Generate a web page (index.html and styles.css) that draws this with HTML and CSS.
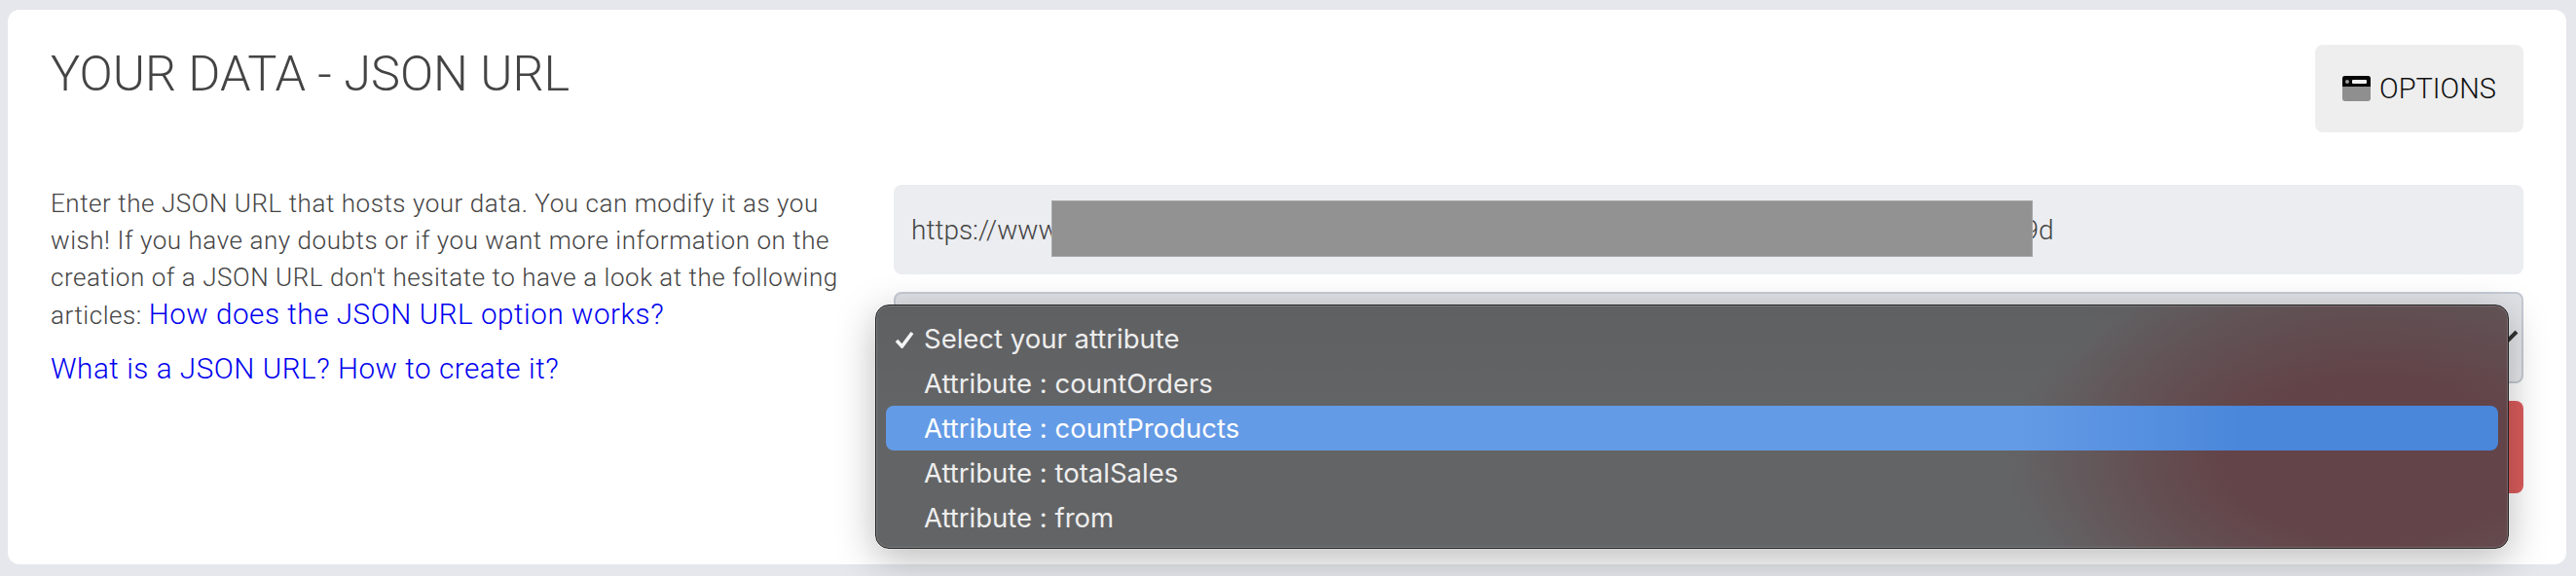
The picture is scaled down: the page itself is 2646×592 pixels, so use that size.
FILE: index.html
```html
<!DOCTYPE html>
<html lang="en">
<head>
    <meta charset="UTF-8">
    <title>Your data - JSON URL</title>
    <link rel="stylesheet" href="styles.css">
</head>
<body>
    <section class="card">
        <header class="card-head">
            <h1>YOUR DATA - JSON URL</h1>
            <button class="options-btn">
                <svg class="options-icon" viewBox="0 0 29 26" width="29" height="26">
                    <rect width="29" height="26" rx="3" fill="#8f8f8f"/>
                    <path d="M3 0h23a3 3 0 0 1 3 3v8H0V3a3 3 0 0 1 3-3z" fill="#050505"/>
                    <circle cx="5" cy="6" r="2" fill="#9a9a9a"/>
                    <rect x="10" y="4" width="15" height="4" rx="1" fill="#f2f2f2"/>
                </svg>
                OPTIONS
            </button>
        </header>
        <div class="columns">
            <div class="intro">
                <p>Enter the JSON URL that hosts your data. You can modify it as you wish! If you have any doubts or if you want more information on the creation of a JSON URL don't hesitate to have a look at the following articles: <a href="#">How does the JSON URL option works?</a></p>
                <p class="intro-link"><a href="#">What is a JSON URL? How to create it?</a></p>
            </div>
            <div class="fields">
                <div class="url-field">
                    <span>https://www</span>
                    <span class="redacted"></span>
                    <span class="url-end">9d</span>
                </div>
                <div class="select-field">
                    <svg class="chevron" viewBox="0 0 34 20" width="34" height="20">
                        <path d="M2 2l15 15L32 2" fill="none" stroke="#333" stroke-width="4"/>
                    </svg>
                </div>
                <div class="submit-row">
                    <button class="submit-btn"></button>
                </div>
                <ul class="menu">
                    <li class="menu-item">
                        <svg class="check" viewBox="0 0 20 18" width="20" height="18">
                            <path d="M2 10l5.5 6L18 2" fill="none" stroke="#f4f4f4" stroke-width="3.6"/>
                        </svg>
                        Select your attribute
                    </li>
                    <li class="menu-item">Attribute : countOrders</li>
                    <li class="menu-item active">Attribute : countProducts</li>
                    <li class="menu-item">Attribute : totalSales</li>
                    <li class="menu-item">Attribute : from</li>
                </ul>
            </div>
        </div>
    </section>
</body>
</html>
```

FILE: styles.css
```css
html, body {
    height: 100%;
    overflow: hidden;
}
body {
    margin: 0;
    padding: 10px 10px 12px 8px;
    box-sizing: border-box;
    background-color: #e5e7ec;
    color: #444;
    font-family: 'Roboto', 'Liberation Sans', sans-serif;
    font-weight: 300;
}
.card {
    background-color: #fff;
    border-radius: 12px;
    padding: 36px 44px 73px;
}
.card-head {
    display: flex;
    justify-content: space-between;
    align-items: flex-start;
    margin-bottom: 54px;
}
h1 {
    margin: 0;
    font-size: 50.5px;
    font-weight: 300;
    line-height: 60px;
    color: #444;
}
.options-btn {
    display: flex;
    align-items: center;
    justify-content: center;
    gap: 9px;
    width: 214px;
    height: 90px;
    border: none;
    border-radius: 8px;
    background-color: #eee;
    color: #111;
    font-family: inherit;
    font-size: 29px;
    font-weight: 300;
}
.options-icon {
    flex: none;
}
.columns {
    display: grid;
    grid-template-columns: 820px 1fr;
    gap: 46px;
}
.intro {
    font-size: 26px;
    line-height: 38px;
    letter-spacing: 0.55px;
}
.intro p {
    margin: 0;
}
.intro .intro-link {
    margin-top: 17px;
}
.intro a {
    color: #0000ee;
    text-decoration: none;
    font-size: 29.6px;
}
.fields {
    position: relative;
    display: flex;
    flex-direction: column;
    gap: 18px;
}
.url-field {
    display: flex;
    align-items: center;
    height: 92px;
    padding-left: 18px;
    border-radius: 8px;
    background-color: #ecedf1;
    font-size: 28px;
    color: #444;
}
.redacted {
    width: 1008px;
    height: 58px;
    margin: -2px 0 0 -8px;
    box-sizing: border-box;
    border: 1px solid #a6a6a8;
    background-color: #929292;
    position: relative;
}
.url-end {
    margin-left: -9px;
}
.select-field {
    display: flex;
    align-items: center;
    justify-content: flex-end;
    height: 94px;
    box-sizing: border-box;
    padding: 4px 3px 0 0;
    border: 2px solid #c5cad3;
    border-radius: 8px;
    background: linear-gradient(#dfe1e6, #e8e9ed);
}
.submit-row {
    display: flex;
    justify-content: flex-end;
}
.submit-btn {
    width: 372px;
    height: 95px;
    border: none;
    border-radius: 8px;
    background-color: #dc5c5c;
}
.menu {
    position: absolute;
    top: 123px;
    left: -19px;
    right: 15px;
    margin: 0;
    padding: 11px 10px 8px;
    list-style: none;
    border: 1px solid #1e1e1e;
    border-radius: 14px;
    background-image:
        linear-gradient(180deg, rgba(0, 0, 0, 0.04), rgba(0, 0, 0, 0) 45%),
        radial-gradient(ellipse 380px 200px at 1540px 157px, #634448 0%, #634448 40%, rgba(99, 68, 72, 0) 100%),
        linear-gradient(90deg, #636466 0%, #636466 74%, #655b5e 88%, #655b5e 100%);
    box-shadow: inset 0 0 0 1px rgba(255, 255, 255, 0.18), 0 10px 40px rgba(0, 0, 0, 0.28);
    font-family: 'Inter', 'Liberation Sans', sans-serif;
    font-size: 27.5px;
    font-weight: 400;
    color: #eee;
}
.menu-item {
    position: relative;
    height: 46px;
    padding-left: 39px;
    border-radius: 8px;
    line-height: 46px;
}
.menu-item.active {
    background: linear-gradient(90deg, #649be6 0%, #649be6 70%, #4a86da 84%, #4a86da 100%);
    color: #fff;
}
.check {
    position: absolute;
    left: 9px;
    top: 15px;
}
```
